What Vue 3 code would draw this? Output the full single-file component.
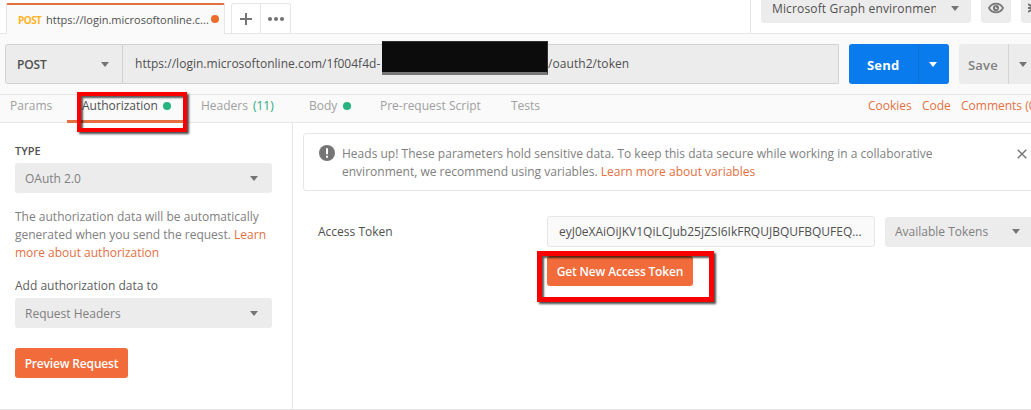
<script setup>
const requestTabs = [
  { name: 'Params', key: 'params' },
  { name: 'Authorization', key: 'auth', dot: true, active: true },
  { name: 'Headers', key: 'headers', count: '(11)' },
  { name: 'Body', key: 'body', dot: true },
  { name: 'Pre-request Script', key: 'script' },
  { name: 'Tests', key: 'tests' },
]
</script>

<template>
  <div class="app">
    <header class="topbar">
      <div class="tab">
        <span class="verb">POST</span>
        <span class="tab-url">https://login.microsoftonline.c...</span>
        <i class="unsaved"></i>
      </div>
      <div class="tab-actions">
        <div class="plus"><svg width="12" height="12" viewBox="0 0 12 12"><path d="M6 0v12M0 6h12" stroke="#757575" stroke-width="2" /></svg></div>
        <div class="more"><svg width="18" height="6" viewBox="0 0 18 6"><g fill="#757575"><circle cx="3" cy="3" r="2.1" /><circle cx="9" cy="3" r="2.1" /><circle cx="15" cy="3" r="2.1" /></g></svg></div>
      </div>
      <div class="environment">
        <div class="env-select"><span class="env-name">Microsoft Graph environment</span><i class="caret"></i></div>
        <div class="icon-btn">
          <svg width="16" height="12" viewBox="0 0 16 12"><path d="M1 6C4 .2 12 .2 15 6C12 11.8 4 11.8 1 6Z" fill="none" stroke="#757575" stroke-width="1.7" /><circle cx="8" cy="6" r="3.1" fill="#757575" /><path d="M7.6 4.6v2h1.8" fill="none" stroke="#ececec" stroke-width="1" /></svg>
        </div>
        <div class="icon-btn gear"><svg width="12" height="14" viewBox="0 0 12 14"><path d="M0 3l3 2M0 7h4M0 11l3-2" stroke="#757575" stroke-width="2" /><circle cx="7" cy="7" r="4" fill="none" stroke="#757575" stroke-width="2" /></svg></div>
      </div>
    </header>

    <section class="request">
      <div class="url-box">
        <div class="method"><span class="method-name">POST</span><i class="caret"></i></div>
        <div class="url"><span class="url-start">https://login.microsoftonline.com/1f004f4d-</span><span class="url-end">/oauth2/token</span><i class="redaction"></i></div>
      </div>
      <div class="send"><span>Send</span><b><i class="caret white"></i></b></div>
      <div class="save"><span>Save</span><b><i class="caret"></i></b></div>
    </section>

    <nav class="subtabs">
      <div v-for="t in requestTabs" :key="t.key" class="subtab" :class="[t.key, { active: t.active }]">
        <span>{{ t.name }}</span><em v-if="t.count">{{ t.count }}</em><i v-if="t.dot" class="dot"></i>
      </div>
      <div class="links"><a class="cookies">Cookies</a><a class="code">Code</a><a class="comments">Comments (0)</a></div>
      <div class="mark auth-mark"></div>
    </nav>

    <main class="content">
      <aside class="side">
        <h2>TYPE</h2>
        <div class="select"><span class="oauth">OAuth 2.0</span><i class="caret"></i></div>
        <p><span class="l1">The authorization data will be automatically</span><br><span class="l2">generated when you send the request. <a>Learn</a></span><br><a class="l3">more about authorization</a></p>
        <div class="add-label"><span>Add authorization data to</span></div>
        <div class="select"><span class="reqh">Request Headers</span><i class="caret"></i></div>
        <button class="preview"><span>Preview Request</span></button>
      </aside>

      <section class="detail">
        <div class="notice">
          <svg class="alert" width="16" height="16" viewBox="0 0 16 16"><circle cx="8" cy="8" r="8" fill="#757575" /><path d="M8 3.2v6M8 10.8v2" stroke="#fff" stroke-width="2" /></svg>
          <div class="notice-text"><span class="n1">Heads up! These parameters hold sensitive data. To keep this data secure while working in a collaborative</span><br><span class="n2">environment, we recommend using variables. <a>Learn more about variables</a></span></div>
          <svg class="close" width="10" height="10" viewBox="0 0 10 10"><path d="M.7.7l8.6 8.6M9.3.7L.7 9.3" stroke="#757575" stroke-width="1.4" /></svg>
        </div>
        <div class="token-row">
          <label><span>Access Token</span></label>
          <div class="token-field"><span>eyJ0eXAiOiJKV1QiLCJub25jZSI6IkFRQUJBQUFBQUFEQ...</span></div>
          <div class="available"><span>Available Tokens</span><i class="caret"></i></div>
        </div>
        <div class="get-row">
          <button class="get"><span>Get New Access Token</span></button>
          <div class="mark get-mark"></div>
        </div>
      </section>
    </main>
  </div>
</template>

<style>
body { overflow: hidden; background: #fff; }
</style>

<style scoped>
* { box-sizing: border-box; }
.app { width: 1031px; height: 410px; overflow: hidden; display: flex; flex-direction: column; font: 12px/18px "Open Sans", sans-serif; color: #505050; background: #fff; white-space: nowrap; }
i, em { font-style: normal; }
span { display: inline-block; }
a { color: #e4703f; }
.caret { flex: none; width: 0; height: 0; border: 4px solid transparent; border-top: 5px solid #757575; border-bottom: 0; }
.caret.white { border-top-color: #fff; }
.topbar { height: 34px; flex: none; display: flex; border-bottom: 1px solid #e6e6e6; padding-left: 6px; }
.tab { width: 219px; height: 31px; margin-top: 3px; background: #fafafa; border: 1px solid #e6e6e6; border-top: 2px solid #e0703d; border-bottom: 0; border-radius: 2px 2px 0 0; display: flex; align-items: center; padding: 0 4px 0 11px; }
.verb { color: #ffb31f; font-size: 10px; font-weight: 700; width: 28px; letter-spacing: -.55px; }
.tab-url { font-size: 11px; width: 165px; }
.unsaved { width: 8px; height: 8px; border-radius: 50%; background: #ed6b2b; flex: none; margin-top: -2px; }
.tab-actions { display: flex; width: 60px; height: 30px; margin: 3px 0 0 6px; border: 1px solid #e6e6e6; border-bottom: 0; border-radius: 3px 3px 0 0; }
.plus, .more { display: flex; align-items: center; justify-content: center; width: 30px; }
.plus { border-right: 1px solid #e6e6e6; }
.environment { margin-left: auto; width: 281px; border-left: 1px solid #e6e6e6; padding-left: 10px; display: flex; gap: 10px; flex: none; }
.env-select { width: 210px; height: 23px; background: #ececec; border-radius: 0 0 3px 3px; display: flex; padding: 0 12px 0 11px; justify-content: space-between; align-items: center; flex: none; }
.env-name { width: 164px; overflow: hidden; font-weight: 500; letter-spacing: .15px; margin-top: -5px; }
.env-select .caret { margin-top: -6px; }
.icon-btn { width: 30px; height: 23px; background: #ececec; border-radius: 0 0 3px 3px; flex: none; display: flex; justify-content: center; padding-top: 2px; }
.gear { justify-content: flex-start; padding-left: 7px; padding-top: 1px; }
.request { height: 60px; flex: none; background: #fafafa; display: flex; padding: 10px 0 0 5px; }
.url-box { width: 834px; height: 40px; background: #ececec; border: 1px solid #d2d2d2; border-radius: 3px 0 0 3px; display: flex; flex: none; }
.method { width: 117px; border-right: 1px solid #d2d2d2; display: flex; justify-content: space-between; align-items: center; padding: 0 13px 0 11px; font-weight: 600; letter-spacing: -.1px; flex: none; }
.method-name { position: relative; top: 1px; }
.url { position: relative; display: flex; align-items: center; padding-left: 12px; font-size: 12px; }
.url-start { width: 247px; letter-spacing: .02px; }
.url-end { margin-left: 166px; letter-spacing: .06px; }
.redaction { position: absolute; left: 259px; top: -4px; width: 166px; height: 34px; background: #0c0c0c; border: solid #303030; border-width: 1px 1px 3px 0; border-bottom-color: #777; }
.send, .save { height: 40px; display: flex; align-items: center; flex: none; font-size: 13px; font-weight: 700; }
.send { width: 100px; margin-left: 10px; border-radius: 3px; background: #097bed; color: #fff; }
.send > span, .save > span { flex: none; position: relative; top: 1px; }
.send > span { width: 69px; padding-left: 18px; font-size: 13px; letter-spacing: .2px; }
.save > span { width: 49px; padding-left: 9px; color: #808080; font-weight: 600; font-size: 13px; letter-spacing: .2px; }
.send b, .save b { align-self: stretch; display: flex; align-items: center; padding-left: 10px; flex: 1; border-left: 1px solid #0b6fd4; }
.save { width: 80px; margin-left: 10px; background: #ececec; border-radius: 3px; }
.save b { border-color: #d5d5d5; }
.subtabs { position: relative; height: 29px; flex: none; border: solid #e6e6e6; border-width: 1px 0; background: #fafafa; color: #a0a0a0; display: flex; }
.subtab { display: flex; align-items: center; flex: none; height: 28px; padding-bottom: 7px; }
.dot { width: 8px; height: 8px; background: #26b47f; border-radius: 50%; }
.params { width: 67px; padding-left: 10px; }
.auth { width: 120px; padding-left: 15px; color: #505050; border-bottom: 3px solid #e4703f; padding-bottom: 4px; gap: 5px; }
.headers { width: 122px; padding-left: 14px; gap: 5px; }
.headers em { color: #26a980; }
.body { width: 71px; gap: 6px; }
.script { width: 131px; }
.links { margin-left: auto; width: 163px; display: flex; flex: none; padding-top: 2px; }
.cookies { width: 54px; flex: none; }
.code { width: 39px; flex: none; }
.mark { position: absolute; border: 4px solid #fb0000; box-shadow: 2px 2px 2px rgba(0,0,0,.7), inset 2px 2px 2px rgba(0,0,0,.65); }
.auth-mark { left: 77px; top: -3px; width: 110px; height: 40px; }
.content { display: flex; height: 287px; flex: none; border-bottom: 1px solid #e6e6e6; }
.side { width: 293px; flex: none; border-right: 1px solid #e6e6e6; padding: 19px 20px 0 15px; color: #808080; }
h2 { font-size: 11px; line-height: 18px; font-weight: 600; color: #505050; margin: 0; }
.select { height: 30px; margin-top: 3px; background: #ececec; border-radius: 3px; display: flex; justify-content: space-between; align-items: center; padding: 0 14px 0 10px; }
.select span { position: relative; top: 1px; }
p { margin: 15px 0 15px; }
.add-label { color: #606060; }
button { border: 0; border-radius: 3px; background: #f26b3a; color: #fff; font: 600 12px/18px "Open Sans", sans-serif; letter-spacing: -.17px; height: 30px; padding: 2px 0 0; text-align: center; display: block; }
.preview { width: 113px; margin-top: 20px; }
.detail { flex: none; width: 738px; padding: 10px 0 0 10px; }
.notice { height: 58px; width: 760px; border: 1px solid #e6e6e6; border-radius: 3px; display: flex; color: #808080; padding: 11px 0 0 15px; }
.alert { margin-top: 0; flex: none; }
.notice-text { margin-left: 7px; width: 675px; flex: none; letter-spacing: .01px; }
.close { margin-top: 4px; flex: none; }
.token-row { display: flex; margin-top: 25px; height: 31px; align-items: center; }
label { width: 244px; padding-left: 15px; flex: none; }
.token-field { width: 328px; height: 31px; border: 1px solid #e6e6e6; background: #fafafa; border-radius: 3px; display: flex; align-items: center; padding-left: 11px; flex: none; }
.available { width: 160px; height: 30px; margin-left: 10px; background: #ececec; border-radius: 3px; display: flex; align-items: center; color: #808080; padding-left: 10px; flex: none; }
.available span { width: 117px; }
.get-row { position: relative; margin-top: 9px; padding-left: 244px; }
.get { width: 146px; height: 30px; }
.get-mark { left: 234px; top: -5px; width: 177px; height: 51px; border-width: 5px; }
</style>
